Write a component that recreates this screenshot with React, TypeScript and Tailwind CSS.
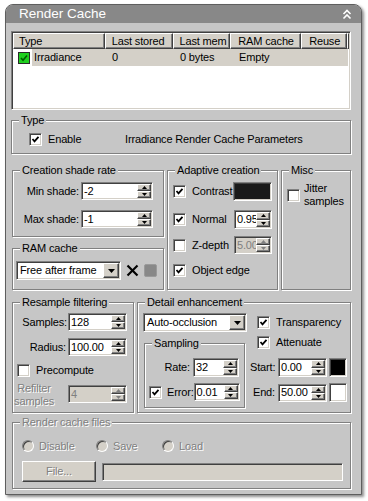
import React from "react";

const sunken =
  "border border-t-[#808080] border-l-[#808080] border-r-white border-b-white shadow-[inset_1px_1px_0_#404040,inset_-1px_-1px_0_#d4d0c8]";
const raised =
  "border border-t-white border-l-white border-r-[#404040] border-b-[#404040] shadow-[inset_-1px_-1px_0_#808080] bg-[#d4d0c8]";
const etched = "text-[#808080] [text-shadow:1px_1px_0_#fff]";

function Check({ checked = false }: { checked?: boolean }) {
  return (
    <span className={`flex h-[13px] w-[13px] shrink-0 items-center justify-center bg-white ${sunken}`}>
      {checked && (
        <svg width="9" height="9" viewBox="0 0 9 9">
          <polyline points="1.5,4 3.5,6.3 7.5,1.8" fill="none" stroke="#000" strokeWidth="1.8" />
        </svg>
      )}
    </span>
  );
}

function Radio() {
  return (
    <span className="h-[12px] w-[12px] shrink-0 rounded-full border border-t-[#808080] border-l-[#808080] border-r-white border-b-white bg-[#d4d0c8] shadow-[inset_1px_1px_0_#404040]" />
  );
}

function Arrow({ up = false, disabled = false }: { up?: boolean; disabled?: boolean }) {
  return (
    <svg width="5" height="3" viewBox="0 0 5 3">
      <polygon points={up ? "2.5,0 5,3 0,3" : "0,0 5,0 2.5,3"} fill={disabled ? "#808080" : "#000"} />
    </svg>
  );
}

function Spinner({
  value,
  w,
  h = "h-[18px]",
  disabled = false,
}: {
  value: string;
  w: string;
  h?: string;
  disabled?: boolean;
}) {
  return (
    <div className={`flex shrink-0 p-[1px] ${h} ${w} ${sunken} ${disabled ? "bg-[#d4d0c8]" : "bg-white"}`}>
      <div
        className={`flex flex-1 items-center overflow-hidden whitespace-nowrap pl-[1px] ${
          disabled ? "text-[#808080]" : ""
        }`}
      >
        {value}
      </div>
      <div className="flex w-[14px] flex-col">
        <div className={`flex flex-1 items-center justify-center ${raised}`}>
          <Arrow up disabled={disabled} />
        </div>
        <div className={`flex flex-1 items-center justify-center ${raised}`}>
          <Arrow disabled={disabled} />
        </div>
      </div>
    </div>
  );
}

function Dropdown({ value, w }: { value: string; w: string }) {
  return (
    <div className={`flex h-[19px] shrink-0 bg-white p-[1px] ${w} ${sunken}`}>
      <div className="flex flex-1 items-center overflow-hidden whitespace-nowrap pl-[2px]">{value}</div>
      <div className={`flex w-[16px] items-center justify-center ${raised}`}>
        <svg width="7" height="4" viewBox="0 0 7 4">
          <polygon points="0,0 7,0 3.5,4" fill="#000" />
        </svg>
      </div>
    </div>
  );
}

function Group({
  label,
  className = "",
  disabled = false,
  children,
}: {
  label: string;
  className?: string;
  disabled?: boolean;
  children: React.ReactNode;
}) {
  return (
    <fieldset
      className={`min-w-0 border border-[#808080] shadow-[inset_1px_1px_0_#fff,1px_1px_0_#fff] ${className}`}
    >
      <legend className={`ml-[7px] bg-[#c6c6c6] px-[2px] leading-[13px] ${disabled ? etched : ""}`}>
        {label}
      </legend>
      {children}
    </fieldset>
  );
}

export default function App() {
  return (
    <div className="h-[501px] w-[368px] bg-white pl-[5px] pt-[4px] font-['Liberation_Sans',Arial,sans-serif] text-[11px] leading-[13px] tracking-[-0.15px] text-black">
      <div className="flex h-[491px] w-[357px] flex-col overflow-hidden rounded-t-[8px] border border-[#5e5e5e] bg-[#c6c6c6] shadow-[2px_2px_3px_rgba(0,0,0,0.45)]">
        {/* Title bar */}
        <div className="flex h-[18px] shrink-0 items-center justify-between bg-[#888888] pl-[13px] pr-[9px] text-[13.5px] leading-none tracking-normal text-white">
          <span>Render Cache</span>
          <svg width="10" height="11" viewBox="0 0 10 11">
            <polyline points="1.5,5 5,1.5 8.5,5" fill="none" stroke="#fff" strokeWidth="1.6" />
            <polyline points="1.5,9.5 5,6 8.5,9.5" fill="none" stroke="#fff" strokeWidth="1.6" />
          </svg>
        </div>

        <div className="pl-[5px] pt-[8px]">
          {/* Cache list */}
          <div className={`h-[79px] w-[340px] bg-white p-[1px] ${sunken}`}>
            <div className="flex h-[16px]">
              <div className={`flex w-[92px] items-center pl-[5px] ${raised}`}>Type</div>
              <div className={`flex w-[68px] items-center pl-[6px] ${raised}`}>Last stored</div>
              <div className={`flex w-[58px] items-center pl-[6px] ${raised}`}>Last mem</div>
              <div className={`flex w-[71px] items-center pl-[7px] ${raised}`}>RAM cache</div>
              <div className={`flex w-[46px] items-center pl-[7px] ${raised}`}>Reuse</div>
              <div className={`flex-1 ${raised}`} />
            </div>
            <div className="flex h-[17px] items-center pl-[5px]">
              <span className="flex h-[12px] w-[12px] items-center justify-center border border-[#2a2a2a] bg-[#1fd01f]">
                <svg width="8" height="8" viewBox="0 0 8 8">
                  <polyline points="1,4 3,6.2 7,1.5" fill="none" stroke="#005c00" strokeWidth="1.6" />
                </svg>
              </span>
              <div className="ml-[2px] flex h-[17px] w-[316px] items-center bg-[#d4d0c8]">
                <span className="w-[73px] pl-[2px]">Irradiance</span>
                <span className="w-[68px] pl-[7px]">0</span>
                <span className="w-[58px] pl-[7px]">0 bytes</span>
                <span className="w-[71px] pl-[8px]">Empty</span>
              </div>
            </div>
          </div>

          {/* Type */}
          <Group label="Type" className="mt-[4px] w-[340px]">
            <div className="flex items-center pb-[7px] pl-[17px] pt-[6px]">
              <div className="flex w-[96px] items-center">
                <Check checked />
                <span className="ml-[6px]">Enable</span>
              </div>
              <span>Irradiance Render Cache Parameters</span>
            </div>
          </Group>

          {/* Row 1 */}
          <div className="ml-[1px] mt-[10px] flex gap-[3px]">
            <div className="flex w-[152px] flex-col">
              <Group label="Creation shade rate">
                <div className="flex flex-col pb-[8px] pt-[5px]">
                  <div className="flex items-center">
                    <span className="w-[66px] text-right">Min shade:</span>
                    <div className="ml-[2px]">
                      <Spinner value="-2" w="w-[72px]" />
                    </div>
                  </div>
                  <div className="mt-[10px] flex items-center">
                    <span className="w-[66px] text-right">Max shade:</span>
                    <div className="ml-[2px]">
                      <Spinner value="-1" w="w-[72px]" />
                    </div>
                  </div>
                </div>
              </Group>
              <Group label="RAM cache" className="mt-[5px]">
                <div className="flex items-center pb-[9px] pl-[3px] pt-[6px]">
                  <Dropdown value="Free after frame" w="w-[105px]" />
                  <svg className="ml-[5px]" width="13" height="13" viewBox="0 0 13 13">
                    <line x1="1.5" y1="1.5" x2="11.5" y2="11.5" stroke="#000" strokeWidth="2.2" />
                    <line x1="11.5" y1="1.5" x2="1.5" y2="11.5" stroke="#000" strokeWidth="2.2" />
                  </svg>
                  <span className="ml-[5px] h-[13px] w-[13px] rounded-[2px] border border-[#9a9a9a] bg-[#888888]" />
                </div>
              </Group>
            </div>

            <Group label="Adaptive creation" className="w-[111px]">
              <div className="flex flex-col pb-[12px] pl-[5px] pr-[5px] pt-[5px]">
                <div className="flex h-[19px] items-center">
                  <Check checked />
                  <span className="ml-[6px]">Contrast</span>
                  <span className={`ml-auto h-[19px] w-[39px] bg-[#1a1a1a] ${sunken}`} />
                </div>
                <div className="mt-[9px] flex h-[19px] items-center">
                  <Check checked />
                  <span className="ml-[6px]">Normal</span>
                  <div className="ml-auto">
                    <Spinner value="0.95" w="w-[38px]" h="h-[19px]" />
                  </div>
                </div>
                <div className="mt-[7px] flex h-[18px] items-center">
                  <Check />
                  <span className="ml-[6px]">Z-depth</span>
                  <div className="ml-auto">
                    <Spinner value="5.00" w="w-[38px]" disabled />
                  </div>
                </div>
                <div className="mt-[10px] flex h-[13px] items-center">
                  <Check checked />
                  <span className="ml-[6px]">Object edge</span>
                </div>
              </div>
            </Group>

            <Group label="Misc" className="w-[70px]">
              <div className="flex items-start pl-[5px] pt-[5px]">
                <div className="mt-[7px]">
                  <Check />
                </div>
                <span className="ml-[4px]">
                  Jitter
                  <br />
                  samples
                </span>
              </div>
            </Group>
          </div>

          {/* Row 2 */}
          <div className="ml-[1px] mt-[6px] flex gap-[3px]">
            <Group label="Resample filtering" className="w-[122px]">
              <div className="flex flex-col pb-[9px] pt-[4px]">
                <div className="flex items-center justify-end pr-[6px]">
                  <span className="mr-[1px]">Samples:</span>
                  <Spinner value="128" w="w-[59px]" />
                </div>
                <div className="mt-[7px] flex items-center justify-end pr-[6px]">
                  <span className="mr-[2px]">Radius:</span>
                  <Spinner value="100.00" w="w-[59px]" />
                </div>
                <div className="mt-[8px] flex h-[13px] items-center pl-[4px]">
                  <Check />
                  <span className="ml-[6px]">Precompute</span>
                </div>
                <div className="mt-[8px] flex h-[18px] items-start justify-end pr-[6px]">
                  <span className={`-mt-[3px] mr-[14px] text-center ${etched}`}>
                    Refilter
                    <br />
                    samples
                  </span>
                  <Spinner value="4" w="w-[59px]" disabled />
                </div>
              </div>
            </Group>

            <Group label="Detail enhancement" className="w-[214px]">
              <div className="flex pb-[4px]">
                <div className="ml-[5px] flex w-[104px] flex-col pt-[4px]">
                  <Dropdown value="Auto-occlusion" w="w-[104px]" />
                  <Group label="Sampling" className="ml-[1px] mt-[5px] w-[101px]">
                    <div className="flex flex-col pb-[6px] pr-[5px] pt-[8px]">
                      <div className="flex h-[19px] items-center justify-end">
                        <span className="mr-[3px]">Rate:</span>
                        <Spinner value="32" w="w-[46px]" h="h-[19px]" />
                      </div>
                      <div className="mt-[6px] flex h-[18px] items-center pl-[4px]">
                        <Check checked />
                        <span className="ml-[5px]">Error:</span>
                        <div className="ml-auto">
                          <Spinner value="0.01" w="w-[46px]" />
                        </div>
                      </div>
                    </div>
                  </Group>
                </div>
                <div className="ml-[3px] flex flex-col pt-[7px]">
                  <div className="flex h-[13px] items-center pl-[7px]">
                    <Check checked />
                    <span className="ml-[6px]">Transparency</span>
                  </div>
                  <div className="mt-[7px] flex h-[13px] items-center pl-[7px]">
                    <Check checked />
                    <span className="ml-[6px]">Attenuate</span>
                  </div>
                  <div className="mt-[9px] flex h-[19px] items-center">
                    <span className="w-[25px] text-right">Start:</span>
                    <div className="ml-[3px]">
                      <Spinner value="0.00" w="w-[49px]" h="h-[19px]" />
                    </div>
                    <span className={`ml-[2px] h-[19px] w-[18px] bg-black ${sunken}`} />
                  </div>
                  <div className="mt-[6px] flex h-[19px] items-center">
                    <span className="w-[25px] text-right">End:</span>
                    <div className="ml-[3px]">
                      <Spinner value="50.00" w="w-[49px]" />
                    </div>
                    <span className={`ml-[2px] h-[19px] w-[18px] bg-white ${sunken}`} />
                  </div>
                </div>
              </div>
            </Group>
          </div>

          {/* Render cache files */}
          <Group label="Render cache files" disabled className="ml-[1px] mt-[3px] w-[339px]">
            <div className="flex flex-col pb-[6px] pl-[9px] pt-[11px]">
              <div className={`flex h-[12px] items-center ${etched}`}>
                <div className="flex w-[74px] items-center">
                  <Radio />
                  <span className="ml-[5px]">Disable</span>
                </div>
                <div className="flex w-[66px] items-center">
                  <Radio />
                  <span className="ml-[5px]">Save</span>
                </div>
                <div className="flex items-center">
                  <Radio />
                  <span className="ml-[5px]">Load</span>
                </div>
              </div>
              <div className="mt-[9px] flex items-center">
                <div className={`flex h-[21px] w-[74px] items-center justify-center ${raised} ${etched}`}>
                  File...
                </div>
                <div className={`ml-[6px] h-[18px] w-[241px] bg-[#d4d0c8] ${sunken}`} />
              </div>
            </div>
          </Group>
        </div>
      </div>
    </div>
  );
}
